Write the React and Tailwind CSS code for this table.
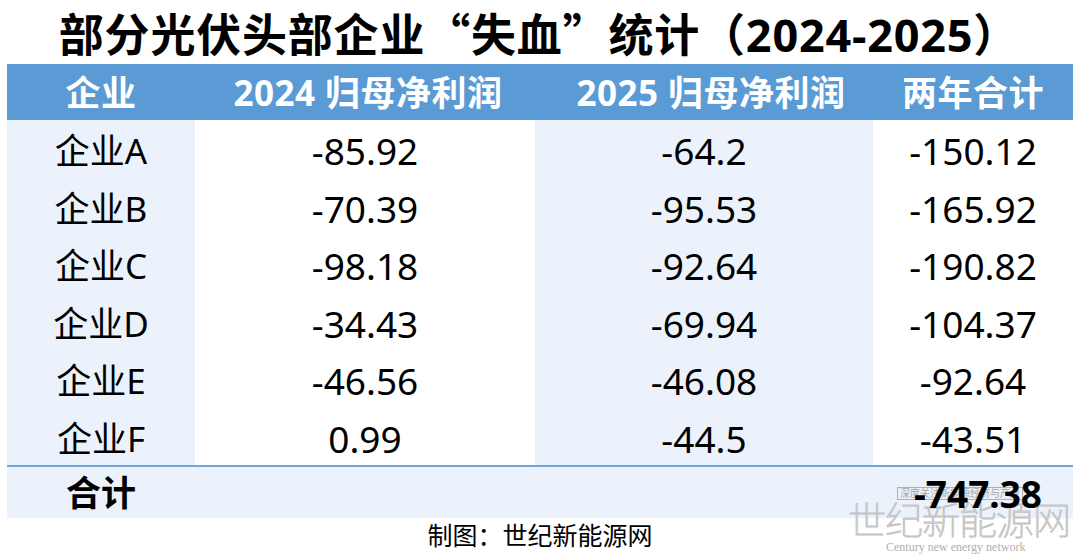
import React from "react";

const rows = [
  ["企业A", "-85.92", "-64.2", "-150.12"],
  ["企业B", "-70.39", "-95.53", "-165.92"],
  ["企业C", "-98.18", "-92.64", "-190.82"],
  ["企业D", "-34.43", "-69.94", "-104.37"],
  ["企业E", "-46.56", "-46.08", "-92.64"],
  ["企业F", "0.99", "-44.5", "-43.51"],
];

const font = { fontFamily: '"Noto Sans", "Noto Sans CJK SC", sans-serif' };
const cjk = { fontFamily: '"Noto Sans CJK SC", sans-serif' };

export default function App() {
  return (
    <div className="relative w-[1080px] h-[556px] bg-white overflow-hidden text-black" style={font}>
      <div className="h-[64px] flex items-center justify-center">
        <h1 className="text-[45px] font-bold leading-none tracking-[0.8px] pr-[2px] pt-[2px]">
          部分光伏头部企业<span style={cjk}>“</span>失血<span style={cjk}>”</span>统计（2024-2025）
        </h1>
      </div>
      <div className="ml-[7px] w-[1066px]">
        <div className="grid grid-cols-[188px_340px_338px_200px] h-[56px] bg-[#5b9bd5] text-white font-bold text-[35px] leading-none tracking-[0.5px]">
          <div className="flex items-center justify-center">企业</div>
          <div className="flex items-center justify-center pl-[6px]">2024 归母净利润</div>
          <div className="flex items-center justify-center pl-[14px]">2025 归母净利润</div>
          <div className="flex items-center justify-center">两年合计</div>
        </div>
        {rows.map((r) => (
          <div key={r[0]} className="grid grid-cols-[188px_340px_338px_200px] h-[57.5px] leading-none">
            <div className="flex items-center justify-center bg-[#ebf2fb] pt-[4px] text-[35px]">{r[0]}</div>
            <div className="flex items-center justify-center bg-white pt-[4px] text-[37px]">{r[1]}</div>
            <div className="flex items-center justify-center bg-[#ebf2fb] pt-[4px] text-[37px]">{r[2]}</div>
            <div className="flex items-center justify-center bg-white pt-[4px] text-[37px]">{r[3]}</div>
          </div>
        ))}
        <div className="grid grid-cols-[188px_340px_338px_200px] h-[53px] bg-[#ebf2fb] border-t-2 border-[#6fa6dc] font-bold leading-none">
          <div className="flex items-center justify-center text-[35px]">合计</div>
          <div />
          <div />
          <div className="relative z-10 flex items-center justify-center text-[37px] pt-[2px] pl-[10px]">-747.38</div>
        </div>
      </div>
      <div className="flex justify-center pt-[5px]">
        <span className="text-[25px] leading-none">制图：世纪新能源网</span>
      </div>

      {/* watermark */}
      <div className="absolute left-[897px] top-[487px] border border-[#b0b0b0] px-[2px] text-[10px] leading-[11px] text-[#a8a8a8]">
        深度关注新能源经济与产业
      </div>
      <div className="absolute left-[848px] top-[500px] text-[38px] leading-none tracking-[-1px] text-white [-webkit-text-stroke:1px_#c4c4c4] font-thin">
        世纪新能源网
      </div>
      <div
        className="absolute left-[886px] top-[541px] text-[12px] leading-none text-[#b0b0b0]"
        style={{ fontFamily: '"Liberation Serif", serif' }}
      >
        Century new energy network
      </div>
    </div>
  );
}
